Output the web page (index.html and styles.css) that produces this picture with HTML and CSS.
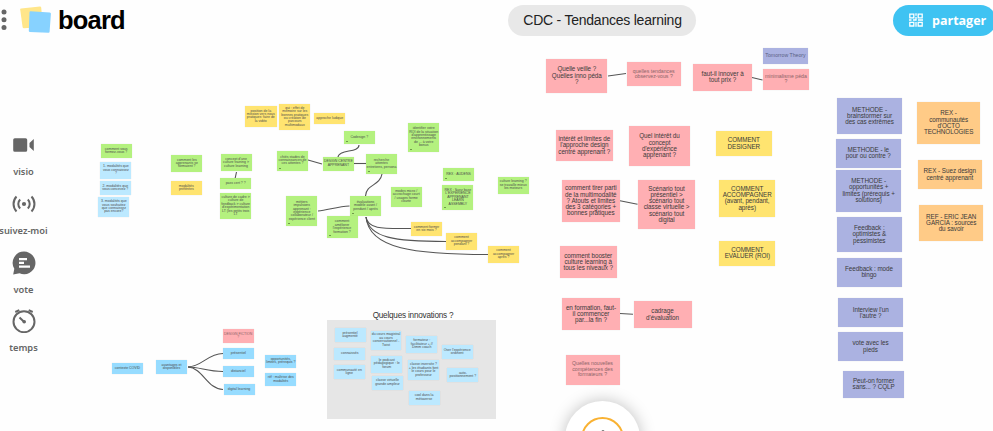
FILE: index.html
```html
<!DOCTYPE html>
<html lang="fr">
<head>
  <meta charset="UTF-8">
  <title>CDC - Tendances learning</title>
  <link rel="stylesheet" href="styles.css">
</head>
<body>
  <div class="app">
    <header class="topbar">
      <svg class="menu" viewBox="0 0 6 22">
        <circle cx="3" cy="3" r="2.5"/><circle cx="3" cy="10.7" r="2.5"/><circle cx="3" cy="18.4" r="2.5"/>
      </svg>
      <svg class="logo" viewBox="0 0 32 28">
        <path d="M1 2.500 20 .5Q21 .5 21.200 1.500L23 21 4 22.300Q2.800 22.300 2.600 21.200L.2 3.500Q.1 2.600 1 2.500Z" fill="#ffe68a"/>
        <path d="M10.500 5.200 29.800 6.400Q31 6.500 30.900 7.700L29.600 25.800Q29.500 26.900 28.400 26.800L9.700 26Q8.700 25.900 8.800 24.800L9.500 6.200Q9.600 5.200 10.500 5.200Z" fill="#87d2ff"/>
      </svg>
      <span class="brand">board</span>
      <h1 class="title">CDC - Tendances learning</h1>
      <button class="share">
        <svg viewBox="0 0 14 14">
          <path d="M.8 1.200h4v3.600h-4zM9.200 1.200h4v3.600h-4zM.8 9.400h4V13h-4zM9.200 9.400h4V13h-4zM7 .3v2.500M7 4v3H4M0 7h2.500M9 7h5M7 9v4.800"/>
        </svg>
        <span>partager</span>
      </button>
    </header>

    <nav class="tools">
      <div class="tool">
        <svg viewBox="0 0 24 24"><path d="M2.800 5.200h10.800q1.600 0 1.600 1.600v10.400q0 1.600-1.600 1.600H2.800Q1.200 18.800 1.200 17.200V6.800Q1.200 5.200 2.800 5.200zM17.500 10l4.300-4v12l-4.300-4z"/></svg>
        <span>visio</span>
      </div>
      <div class="tool">
        <svg class="stroke" viewBox="0 0 24 24"><circle class="dot" cx="12" cy="12" r="2.100"/><path d="M8.200 7.600a6 6 0 0 0 0 8.800M15.800 7.600a6 6 0 0 1 0 8.800M4.500 4.500a11 11 0 0 0 0 15M19.500 4.500a11 11 0 0 1 0 15"/></svg>
        <span>suivez-moi</span>
      </div>
      <div class="tool">
        <svg viewBox="0 0 24 24"><path fill-rule="evenodd" d="M12 .6A11.300 11.300 0 1 1 7.500 22.200L1.200 23.600 2.300 17.700A11.300 11.300 0 0 1 12 .6zM7 7v2.200h8V7zM7 10.700v2.200h5v-2.200zM7 14.500v2.300h11v-2.300z"/></svg>
        <span>vote</span>
      </div>
      <div class="tool">
        <svg class="stroke" viewBox="0 0 24 24"><circle cx="12" cy="12.700" r="10.500"/><path d="M3.300 3 7.300 1.200M16.700 1.200 20.700 3M7.500 8.500 12 12.700"/><circle class="dot" cx="12.200" cy="12.800" r="1.800"/></svg>
        <span>temps</span>
      </div>
    </nav>

    <main class="canvas" id="canvas">
      <section class="zone">
        <h2>Quelques innovations ?</h2>
        <div class="zone-area"></div>
      </section>
      <svg class="links" viewBox="0 0 993 431">
        <path d="M236.500 172 235.200 178"/>
        <path d="M359 145C359 153 339 149 338 157"/>
        <path d="M308 160 322 164"/>
        <path d="M354 163.500H366"/>
        <path d="M382 174C380 186 366 184 365.500 196"/>
        <path d="M318 211C328 210 338 206.500 349.500 206"/>
        <path d="M366 217C368 230 385 228.500 411 228.500"/>
        <path d="M366 217C369 238 395 241.500 446 241.500"/>
        <path d="M366 217C369 249 415 254.500 488 254.500"/>
        <path d="M188 367C203 366 207 354 223 353.500"/>
        <path d="M188 367C200 367 207 371.500 223 371.500"/>
        <path d="M188 367C203 368 207 389 223 389.500"/>
        <path d="M608 76 626 73.500"/>
        <path d="M752 77.500 762.500 80"/>
        <path d="M620 200.800 637.500 204.300"/>
        <path d="M620 313.500 633 314.300"/>
      </svg>
    </main>

    <button class="add" aria-label="Ajouter">
      <span class="ring">
        <svg viewBox="0 0 18 18"><path d="M9 1.500v15M1.500 9h15"/></svg>
      </span>
    </button>
  </div>
  <script src="board.js"></script>
</body>
</html>
```
FILE: styles.css
```css
* {
  box-sizing: border-box;
}
body {
  margin: 0;
  height: 431px;
  overflow: hidden;
  background: #fefefe;
  font-family: "Liberation Sans", Arial, sans-serif;
}
button {
  border: none;
  cursor: pointer;
}
.app {
  position: relative;
  width: 993px;
  height: 431px;
  overflow: hidden;
}

/* top bar */
.topbar {
  display: flex;
  align-items: center;
  width: 996px;
  height: 40px;
}
.menu {
  width: 6px;
  height: 22px;
  margin-left: 1px;
  fill: #666;
}
.logo {
  width: 32px;
  height: 28px;
  margin-left: 13px;
}
.brand {
  width: 70px;
  margin-left: 6px;
  font-size: 25.5px;
  font-weight: bold;
  letter-spacing: -0.8px;
  color: #000;
}
.title {
  display: flex;
  align-items: center;
  justify-content: center;
  width: 188px;
  height: 31px;
  margin: 0 0 0 380px;
  padding-left: 1px;
  border-radius: 16px;
  background: #e8e8e8;
  color: #222;
  font-size: 14px;
  font-weight: normal;
  letter-spacing: -0.23px;
  white-space: nowrap;
}
.share {
  display: flex;
  align-items: center;
  gap: 9px;
  width: 103px;
  height: 31px;
  margin-left: auto;
  padding: 0 0 0 16px;
  border-radius: 16px;
  background: #3fc3f2;
  color: #fff;
  font: bold 12.500px "Open Sans", "Noto Sans", sans-serif;
}
.share svg {
  width: 14px;
  height: 14px;
  fill: none;
  stroke: #fff;
  stroke-width: 1.3;
}

/* left tools */
.tools {
  position: absolute;
  left: -6px;
  top: 133px;
  display: flex;
  flex-direction: column;
  gap: 18.800px;
  width: 59px;
}
.tool {
  display: flex;
  flex-direction: column;
  align-items: center;
  gap: 8px;
  height: 40px;
  color: #666;
  font: 600 9.300px/14px "Noto Sans", "Open Sans", sans-serif;
}
.tool svg {
  flex: none;
  width: 24px;
  height: 24px;
  fill: #666;
}
.tool .stroke {
  fill: none;
  stroke: #666;
  stroke-width: 2;
}
.tool .dot {
  fill: #666;
  stroke: none;
}

/* board */
.canvas {
  position: absolute;
  inset: 0;
  pointer-events: none;
}
.links {
  position: absolute;
  inset: 0;
  fill: none;
  stroke: #555;
  stroke-width: 1.1;
}
.zone {
  position: absolute;
  left: 327px;
  top: 311px;
  width: 169px;
}
.zone h2 {
  margin: 0 0 0 3px;
  color: #333;
  font-size: 8.200px;
  font-weight: normal;
  letter-spacing: -0.22px;
  line-height: 9px;
  text-align: center;
}
.zone-area {
  height: 99px;
  background: #e6e6e6;
}
.note {
  position: absolute;
  display: flex;
  align-items: center;
  justify-content: center;
  text-align: center;
  white-space: pre;
  color: #3a3a3a;
  box-shadow: 0 0 1px rgba(0, 0, 0, 0.12);
}
.large {
  font-size: 6.300px;
  letter-spacing: -0.05px;
  line-height: 6.200px;
}
.medium {
  font-size: 5.200px;
  line-height: 5.500px;
}
.small {
  color: #4c4c4c;
  font-size: 3.500px;
  line-height: 3.400px;
}
.green { background: #b4f17f; }
.yellow { background: #ffe470; }
.blue { background: #97dcff; }
.sky { background: #bce9ff; }
.pink { background: #ffafb3; }
.violet { background: #abb2e1; }
.orange { background: #ffcb87; }
.faded { color: #8c6468; }
.violet.faded { color: #5a5f85; }
.done::after {
  content: "";
  position: absolute;
  left: 2px;
  bottom: 2px;
  width: 2px;
  height: 1px;
  background: #6f9a4a;
}

/* add button */
.add {
  position: absolute;
  left: 565px;
  top: 401px;
  display: flex;
  align-items: center;
  justify-content: center;
  width: 75px;
  height: 75px;
  padding: 0;
  border-radius: 50%;
  background: #fff;
  box-shadow: 0 0 16px rgba(0, 0, 0, 0.25);
}
.ring {
  display: flex;
  align-items: center;
  justify-content: center;
  width: 43px;
  height: 43px;
  border: 2px solid #f9b233;
  border-radius: 50%;
}
.ring svg {
  width: 18px;
  height: 18px;
  fill: none;
  stroke: #777;
  stroke-width: 3;
  stroke-linecap: round;
}
```
FILE: board.js
```javascript
// x, y, width, height, classes, text
const notes = [
  [100.7, 144.3, 31, 14, 'green small', 'comment vous\nformez-vous ?'],
  [100.4, 162, 31, 17, 'sky small', '1. modalités que\nvous connaissez\n?'],
  [99.8, 181.3, 31, 13.7, 'sky small', '2. modalités que\nvous concevez ?'],
  [98.3, 197, 31, 20, 'sky small', '3. modalités que\nvous souhaitez\nque connaissez\npas encore?'],
  [171.3, 155, 31, 17.3, 'green small', 'comment les\napprenants se\nformaient ?'],
  [170.8, 181, 31, 14, 'yellow small', 'modalités\npréférées'],
  [220.5, 154.3, 31, 17, 'green small', "concept d'une\nculture training >\nculture learning"],
  [220.2, 178.3, 31, 11, 'green small', 'pass cert ? ?'],
  [220.2, 193, 31, 26.3, 'green small', "culture de cadre >\nculture de\nfeedback > culture\nd'expérimentation\nLT (les petits trois\nLT"],
  [244.8, 106, 32, 20.8, 'yellow small', 'position de la\nmission vers nous\npratiques: faire de\nla vidéo'],
  [279.3, 104, 31, 26, 'yellow small', 'qui : effet de\nmémoire sur les\nbonnes pratiques\nou création de\nparcours\nmultimodaux'],
  [314.3, 113.3, 31, 11, 'yellow small', 'approche ludique'],
  [344, 130.7, 30.5, 13.3, 'green small done', 'Codesign ?'],
  [277, 151, 31, 19.5, 'green small done', 'chiés stades de\nconnaissances de\nces attentes ?'],
  [323, 157, 30.7, 13.8, 'green small', 'DESIGN CENTRE\nAPPRENANT'],
  [366, 154.2, 31, 19.5, 'green small done', 'recherche\nattentes\nentretiens, persona'],
  [286.3, 196.3, 31, 29.3, 'green small done', 'métiers\nimpulsions\napprenant :\nexpérience\ncollaborateur /\nexpérience client'],
  [350, 196.2, 31, 19.8, 'green small done', 'évaluations\nmodèle avant /\npendant / après'],
  [326.5, 216, 31, 22.3, 'green small done', "comment\naméliorer\nl'expérience\nformation ?"],
  [408.2, 123.2, 31, 28.6, 'green small done', "identifier votre\nROI de la situation\nd'apprentissage\nenvironnements\nde ... à votre\nbonus"],
  [443, 168, 31, 13, 'green small done', 'REX : AUDENS'],
  [442.4, 184.8, 31, 25.5, 'green small done', 'REX : Suez base\nL\'EXPÉRIENCE\nAPPRENANT\nLEARN\nASSEMBLY'],
  [390.7, 186.8, 31, 20, 'green small', 'modes micro /\naccrochage court\n/ usages forme\ncourte'],
  [497.7, 177, 31, 16.8, 'green small', 'culture learning ?\nse travaille mieux\nles moteurs'],
  [411, 222.2, 31, 13.6, 'yellow small', 'comment former\nen six mois ?'],
  [446, 233.2, 31, 16.8, 'yellow small', 'comment\naccompagner\npendant ?'],
  [488, 246, 31, 17, 'yellow small', 'comment\naccompagner\naprès ?'],

  [222.7, 329.2, 31, 14, 'pink small faded', 'DESIGN FICTION\n?'],
  [222.8, 348.3, 31, 11, 'blue small', 'présentiel'],
  [222.8, 366, 31, 11, 'blue small', 'distanciel'],
  [223.5, 384, 31, 11, 'blue small', 'digital learning'],
  [112, 362.8, 31, 11, 'blue small', 'contexte COVID'],
  [156, 360, 31, 14, 'blue small', 'avantages et\ndisponibles'],
  [265.3, 354.5, 31, 13.8, 'blue small', 'opportunités,\nlimites, prérequis ?'],
  [265.3, 372.8, 31, 13.7, 'blue small', 'réf : maîtrise des\nmodalités'],

  [334.5, 328.3, 31, 14, 'sky small', 'présentiel\naugmenté'],
  [334.3, 348.3, 31, 11.3, 'sky small', 'connaissés'],
  [333.8, 365.3, 31, 14, 'sky small', 'communauté en\nligne'],
  [370.8, 330.5, 30.5, 19.5, 'sky small', 'du cours magistral\nau cours\nconversationnel -\nTwist'],
  [371.2, 355.5, 31, 17, 'sky small', 'le podcast\npédagogique : le\nforum'],
  [372, 376, 31, 13.5, 'sky small', 'classe virtuelle\ngrande ampleur'],
  [406.3, 336, 31, 17, 'sky small', 'formateur :\nfacilitateur + //\nDimm coach'],
  [408, 360.3, 31, 20, 'sky small', 'classe inversée ?\n+ les étudiants font\nle cours pour le\nprofesseur'],
  [408.5, 391, 31, 13.8, 'sky small', 'cool dans la\nmétaverse'],
  [441.7, 345, 31, 14, 'sky small', "Oser l'expérience\nordinent"],
  [447.4, 368.3, 31, 13.7, 'sky small', 'auto-\npositionnement ?'],

  [546.3, 59, 61, 33.6, 'pink large', 'Quelle veille ?\nQuelles inno péda\n?'],
  [626.5, 62, 54.5, 24.4, 'pink medium faded', 'quelles tendances\nobservez-vous ?'],
  [693.3, 64.2, 58.7, 26.6, 'pink large', 'faut-il innover à\ntout prix ?'],
  [762.8, 47.8, 45.4, 16.2, 'violet medium faded', 'Tomorrow Theory'],
  [762.6, 69, 46.6, 20.8, 'pink medium faded', 'minimalisme péda\n?'],
  [555.5, 129.8, 57.6, 31.6, 'pink large', "intérêt et limites de\nl'approche design\ncentré apprenant ?"],
  [629.2, 126.2, 60.6, 39.4, 'pink large', "Quel intérêt du\nconcept\nd'expérience\napprenant ?"],
  [715.8, 131, 56, 25.4, 'yellow large', 'COMMENT\nDESIGNER'],
  [562, 179.6, 57.6, 42.8, 'pink large', 'comment tirer parti\nde la multimodalité\n? Atouts et limites\ndes 3 catégories +\nbonnes pratiques'],
  [637.8, 180, 57.6, 48.7, 'pink large', 'Scénario tout\nprésentiel >\nscénario tout\nclasse virtuelle >\nscénario tout\ndigital'],
  [719.2, 180.2, 56, 36.6, 'yellow large', 'COMMENT\nACCOMPAGNER\n(avant, pendant,\naprès)'],
  [559.5, 246.2, 57.4, 31.6, 'pink large', 'comment booster\nculture learning à\ntous les niveaux ?'],
  [719.4, 240.6, 56, 25.4, 'yellow large', 'COMMENT\nEVALUER (ROI)'],
  [562, 298.2, 58, 32, 'pink large', 'en formation, faut-\nil commencer\npar...la fin ?'],
  [633.5, 301.4, 58, 26.4, 'pink large', "cadrage\nd'évaluation"],
  [565.5, 354.8, 54, 29.8, 'pink medium faded', 'Quelles nouvelles\ncompétences des\nformateurs ?'],

  [837, 98.3, 65, 35.6, 'violet large', 'METHODE -\nbrainstormer sur\ndes cas extrêmes'],
  [835.8, 139, 65, 28.8, 'violet large', 'METHODE - le\npour ou contre ?'],
  [836.3, 169.5, 64.8, 42.4, 'violet large', 'METHODE -\nopportunités +\nlimites (prérequis +\nsolutions)'],
  [836.8, 216.7, 65, 35.8, 'violet large', 'Feedback :\noptimistes &\npessimistes'],
  [836.5, 257.8, 65, 29.2, 'violet large', 'Feedback : mode\nbingo'],
  [838.2, 298.3, 65, 29.2, 'violet large', "Interview l'un\nl'autre ?"],
  [838, 332, 65, 29.4, 'violet large', 'vote avec les\npieds'],
  [843.3, 370.8, 60.6, 27.2, 'violet large', 'Peut-on former\nsans... ? CQLP'],
  [916.8, 102, 63.7, 41.6, 'orange large', "REX -\ncommunautés\nd'OCTO\nTECHNOLOGIES"],
  [918, 160, 63.6, 29.2, 'orange large', 'REX - Suez design\ncentré apprenant'],
  [919.3, 205.4, 63.8, 35.4, 'orange large', 'REF - ERIC JEAN\nGARCIA : sources\ndu savoir']
];

const canvas = document.getElementById('canvas');

notes.forEach(([x, y, w, h, classes, text]) => {
  const note = document.createElement('div');
  note.className = 'note ' + classes;
  note.style.left = x + 'px';
  note.style.top = y + 'px';
  note.style.width = w + 'px';
  note.style.height = h + 'px';
  note.textContent = text;
  canvas.appendChild(note);
});
```
